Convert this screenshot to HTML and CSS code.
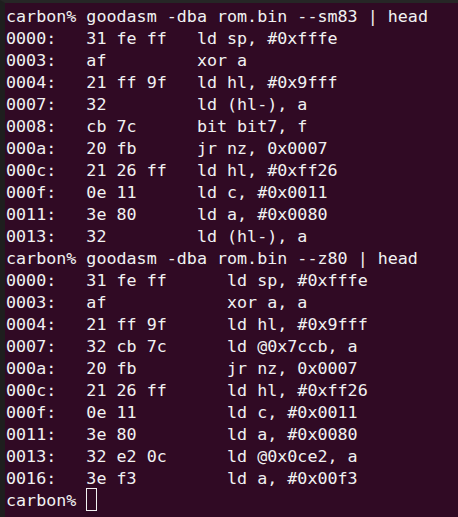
FILE: index.html
```html
<!DOCTYPE html>
<html>
<head>
<meta charset="utf-8">
<link rel="stylesheet" href="styles.css">
</head>
<body>
<div class="frame">
<pre class="term">carbon% goodasm -dba rom.bin --sm83 | head
0000:   31 fe ff   ld sp, #0xfffe
0003:   af         xor a
0004:   21 ff 9f   ld hl, #0x9fff
0007:   32         ld (hl-), a
0008:   cb 7c      bit bit7, f
000a:   20 fb      jr nz, 0x0007
000c:   21 26 ff   ld hl, #0xff26
000f:   0e 11      ld c, #0x0011
0011:   3e 80      ld a, #0x0080
0013:   32         ld (hl-), a
carbon% goodasm -dba rom.bin --z80 | head
0000:   31 fe ff      ld sp, #0xfffe
0003:   af            xor a, a
0004:   21 ff 9f      ld hl, #0x9fff
0007:   32 cb 7c      ld @0x7ccb, a
000a:   20 fb         jr nz, 0x0007
000c:   21 26 ff      ld hl, #0xff26
000f:   0e 11         ld c, #0x0011
0011:   3e 80         ld a, #0x0080
0013:   32 e2 0c      ld @0x0ce2, a
0016:   3e f3         ld a, #0x00f3
carbon% <span class="cursor"></span></pre>
</div>
</body>
</html>
```
FILE: styles.css
```css
html, body {
  margin: 0;
  padding: 0;
  background: #300a24;
  height: 100%;
  overflow: hidden;
}
.frame {
  border-top: 3px solid #262626;
  border-left: 5px solid #1e1e1e;
  height: 100%;
  box-sizing: border-box;
}
.term {
  margin: 0;
  padding: 2px 0 0 1px;
  font-family: "DejaVu Sans Mono", monospace;
  font-size: 16.7px;
  line-height: 22px;
  color: #f2f2f2;
  white-space: pre;
}
.cursor {
  display: inline-block;
  width: 11px;
  height: 23px;
  margin-top: -1px;
  box-sizing: border-box;
  border: 1px solid #f2f2f2;
  vertical-align: top;
}
```
